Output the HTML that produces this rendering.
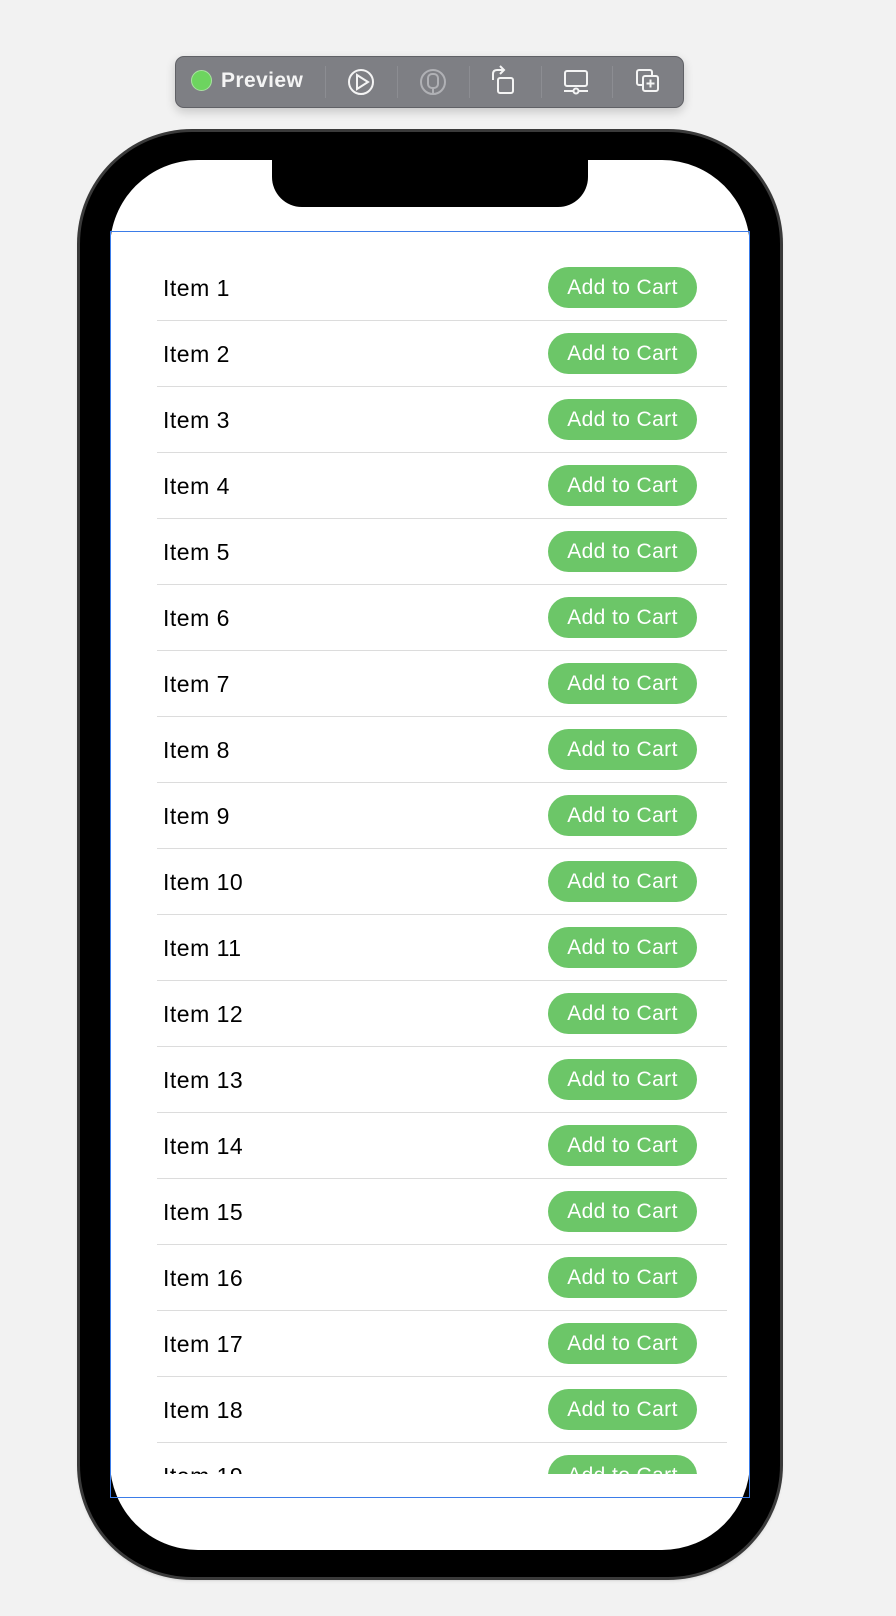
<!DOCTYPE html>
<html><head><meta charset="utf-8"><style>
html,body{margin:0;padding:0}
body{width:896px;height:1616px;background:#f2f2f2;position:relative;overflow:hidden;font-family:"Liberation Sans",sans-serif}
.tb{position:absolute;left:175px;top:56px;width:507px;height:50px;background:#7e7f84;border:1px solid #606166;border-radius:9px;box-shadow:0 4px 10px rgba(0,0,0,.18)}
.dot{position:absolute;left:191px;top:70px;width:21px;height:21px;border-radius:50%;background:#6dd45f;border:1px solid #a9e3a1;box-sizing:border-box}
.pv{position:absolute;left:221px;top:69px;color:#f4f4f4;font-size:21px;font-weight:bold;letter-spacing:.4px}
.dv{position:absolute;top:66px;width:1px;height:32px;background:#8c8d92}
.phone{position:absolute;left:80px;top:132px;width:700px;height:1445px;background:#000;border-radius:112px;box-shadow:0 0 0 3px #3a3a3a,0 2px 5px rgba(0,0,0,.3)}
.screen{position:absolute;left:110px;top:160px;width:640px;height:1390px;background:#fff;border-radius:88px}
.notch{position:absolute;left:272px;top:155px;width:316px;height:52px;background:#000;border-radius:0 0 30px 30px}
.blue{position:absolute;left:110px;top:231px;width:638px;height:1265px;border:1px solid #3b7ce8}
.list{position:absolute;left:111px;top:255px;width:638px;height:1219px;overflow:hidden}
.row{position:relative;height:66px}
.row .t{position:absolute;left:52px;top:20px;font-size:23px;color:#000;letter-spacing:.5px}
.row .b{position:absolute;left:437px;top:12px;width:149px;height:41px;border-radius:21px;background:#6cc668;color:#fff;font-size:21px;text-align:center;line-height:41px;letter-spacing:.4px}
.row .s{position:absolute;left:46px;right:22px;bottom:0;height:1px;background:#dcdcdc}
</style></head><body>
<div class="tb"></div>
<div class="dot"></div>
<div class="pv">Preview</div>
<div class="dv" style="left:325px"></div><div class="dv" style="left:397px"></div><div class="dv" style="left:469px"></div><div class="dv" style="left:541px"></div><div class="dv" style="left:612px"></div>
<svg style="position:absolute;left:0;top:0" width="896" height="130" fill="none" stroke="#f4f4f4" stroke-width="2">
<circle cx="361" cy="82" r="12"/><path d="M357 75 L368 82 L357 89 Z"/>
<g stroke="#b0b1b5"><circle cx="433" cy="82" r="12"/><rect x="428" y="74" width="10" height="14" rx="4"/><path d="M433 88 V94"/></g>
<rect x="498" y="78" width="15" height="15" rx="2"/><path d="M493 80 V74 Q493 70 497 70 H503 M500 66 L504 70 L500 74"/>
<rect x="565" y="71" width="22" height="15" rx="2"/><path d="M564 91 H588"/><circle cx="576" cy="91" r="2.5" fill="#7e7f84"/>
<rect x="637" y="70" width="15" height="15" rx="2"/><rect x="643" y="76" width="15" height="15" rx="2" fill="#7e7f84"/><path d="M650.5 79.5 V87.5 M646.5 83.5 H654.5"/>
</svg>
<div class="phone"></div>
<div class="screen"></div>
<div class="notch"></div>
<div class="blue"></div>
<div class="list">
<div class="row"><span class="t">Item 1</span><span class="b">Add to Cart</span><i class="s"></i></div>
<div class="row"><span class="t">Item 2</span><span class="b">Add to Cart</span><i class="s"></i></div>
<div class="row"><span class="t">Item 3</span><span class="b">Add to Cart</span><i class="s"></i></div>
<div class="row"><span class="t">Item 4</span><span class="b">Add to Cart</span><i class="s"></i></div>
<div class="row"><span class="t">Item 5</span><span class="b">Add to Cart</span><i class="s"></i></div>
<div class="row"><span class="t">Item 6</span><span class="b">Add to Cart</span><i class="s"></i></div>
<div class="row"><span class="t">Item 7</span><span class="b">Add to Cart</span><i class="s"></i></div>
<div class="row"><span class="t">Item 8</span><span class="b">Add to Cart</span><i class="s"></i></div>
<div class="row"><span class="t">Item 9</span><span class="b">Add to Cart</span><i class="s"></i></div>
<div class="row"><span class="t">Item 10</span><span class="b">Add to Cart</span><i class="s"></i></div>
<div class="row"><span class="t">Item 11</span><span class="b">Add to Cart</span><i class="s"></i></div>
<div class="row"><span class="t">Item 12</span><span class="b">Add to Cart</span><i class="s"></i></div>
<div class="row"><span class="t">Item 13</span><span class="b">Add to Cart</span><i class="s"></i></div>
<div class="row"><span class="t">Item 14</span><span class="b">Add to Cart</span><i class="s"></i></div>
<div class="row"><span class="t">Item 15</span><span class="b">Add to Cart</span><i class="s"></i></div>
<div class="row"><span class="t">Item 16</span><span class="b">Add to Cart</span><i class="s"></i></div>
<div class="row"><span class="t">Item 17</span><span class="b">Add to Cart</span><i class="s"></i></div>
<div class="row"><span class="t">Item 18</span><span class="b">Add to Cart</span><i class="s"></i></div>
<div class="row"><span class="t">Item 19</span><span class="b">Add to Cart</span><i class="s"></i></div>
</div>
</body></html>
